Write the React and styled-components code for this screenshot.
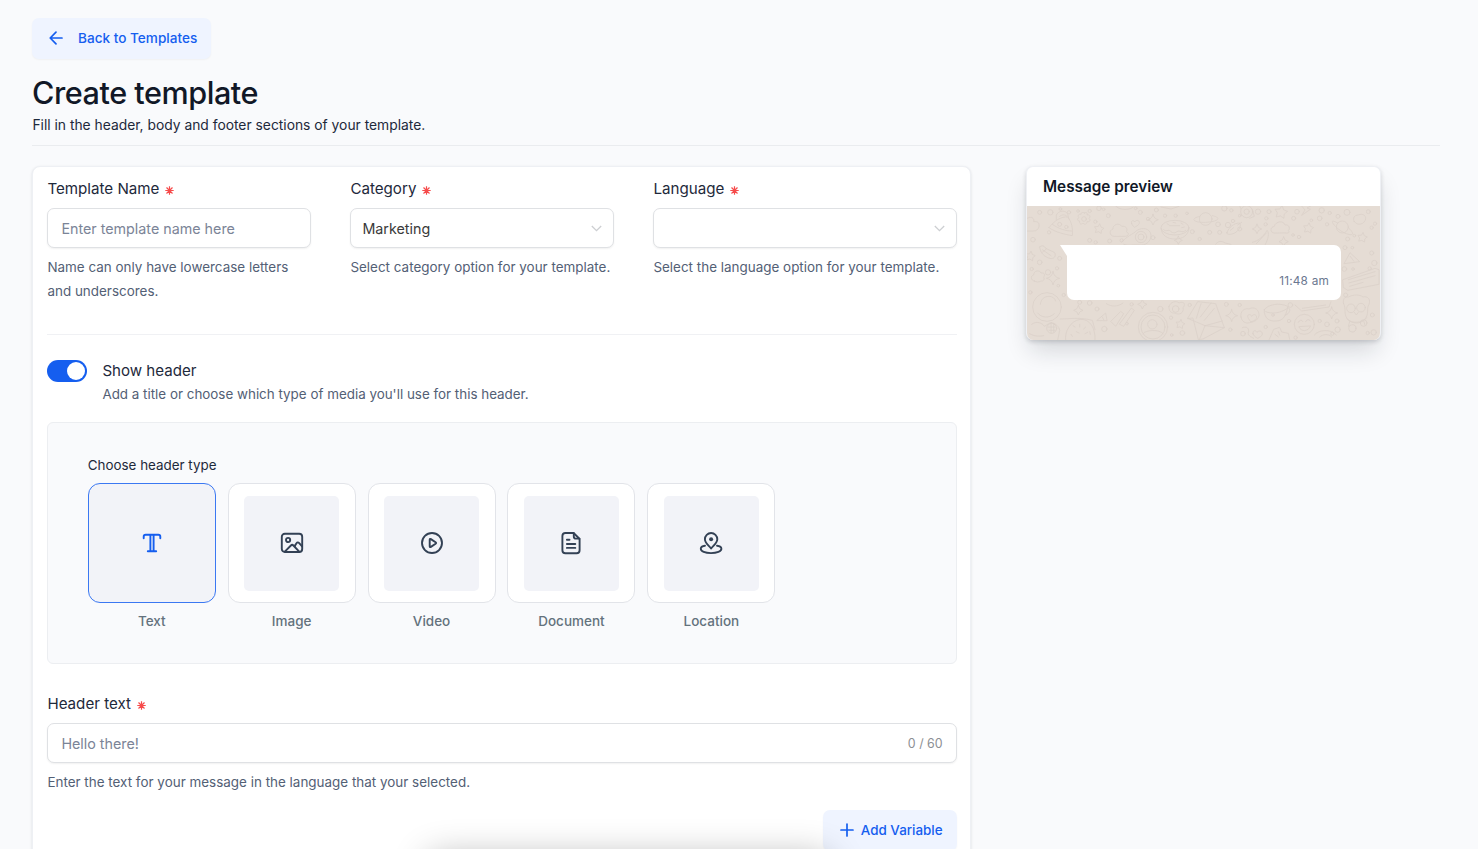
import { useState } from "react";
import styled, { createGlobalStyle } from "styled-components";

const GlobalStyle = createGlobalStyle`
  * {
    box-sizing: border-box;
  }

  body {
    margin: 0;
    background-color: #f9fafc;
    color: #1e293b;
    font-family: Inter, "Liberation Sans", sans-serif;
    overflow: hidden;
  }

  button,
  input {
    font-family: inherit;
  }
`;

const Page = styled.div`
  height: 849px;
  padding: 18px 38px 0 32px;
  overflow: hidden;
`;

const SoftButton = styled.button`
  display: inline-flex;
  align-items: center;
  gap: ${(props) => props.$gap}px;
  height: 41px;
  padding: 0 14px 1px 16px;
  border: none;
  border-radius: 7px;
  background-color: #eff4ff;
  box-shadow: 0 1px 2px rgba(0, 0, 0, 0.04);
  color: #155eef;
  font-size: ${(props) => props.$size || 13.6}px;
  font-weight: 500;
  cursor: pointer;
`;

const PageHead = styled.header`
  height: 87px;
  border-bottom: 1px solid #eaecef;
`;

const Title = styled.h1`
  margin: 0;
  padding-top: 15px;
  color: #111827;
  font-size: 30.6px;
  font-weight: 450;
  letter-spacing: -0.46px;
  line-height: 38px;
`;

const Subtitle = styled.p`
  margin: 0;
  padding: 1px 0 0 0.4px;
  font-size: 13.83px;
  line-height: 24px;
`;

const Columns = styled.main`
  display: flex;
  align-items: flex-start;
  padding-top: 20px;
`;

const FormCard = styled.section`
  width: 939px;
  height: 760px;
  padding: 11px 13.4px 0 14.4px;
  border: 1px solid #eef0f4;
  border-radius: 8px;
  background-color: white;
  box-shadow: 0 1px 3px rgba(16, 24, 40, 0.12);
`;

const FieldRow = styled.div`
  display: grid;
  grid-template-columns: 264px 264px 303.2px;
  column-gap: 39px;
  height: 157px;
  border-bottom: 1px solid #f0f1f4;
`;

const Label = styled.label`
  display: flex;
  align-items: center;
  gap: 6px;
  height: 21px;
  margin-bottom: 9px;
  font-size: 15.15px;
`;

const Control = styled.div`
  display: flex;
  align-items: center;
  height: 40px;
  padding: 0 ${(props) => props.$right || 13}px 0 ${(props) => props.$left || 13}px;
  border: 1px solid #dfe1e4;
  border-radius: 7px;
  background-color: white;
  box-shadow: 0 1px 2px rgba(0, 0, 0, 0.06);
`;

const Input = styled.input`
  flex: 1;
  min-width: 0;
  padding: 0;
  border: none;
  outline: none;
  background: none;
  color: #1e293b;
  font-size: 14.3px;

  &::placeholder {
    color: #7b8497;
    opacity: 1;
  }
`;

const SelectValue = styled.span`
  flex: 1;
  color: #3a3a3a;
  font-size: 14.3px;
`;

const Count = styled.span`
  color: #8c8f94;
  font-size: 12.4px;
`;

const Help = styled.p`
  margin: 8px 0 0;
  color: #536075;
  font-size: 13.45px;
  line-height: 23.6px;
`;

const ToggleRow = styled.div`
  display: flex;
  gap: 15px;
  height: 87px;
  padding-top: 24px;
`;

const Toggle = styled.button`
  display: flex;
  align-items: center;
  justify-content: ${(props) => (props.$on ? "flex-end" : "flex-start")};
  width: 40px;
  height: 22px;
  margin-top: 0.5px;
  padding: 2px;
  border: none;
  border-radius: 11px;
  background-color: ${(props) => (props.$on ? "#155eef" : "#cbd5e1")};
  cursor: pointer;
`;

const Knob = styled.span`
  width: 18px;
  height: 18px;
  border-radius: 50%;
  background-color: white;
`;

const ToggleTitle = styled.div`
  font-size: 15.1px;
  line-height: 24px;
`;

const ToggleHelp = styled(Help)`
  margin: 0;
  font-size: 13.4px;
`;

const TypePanel = styled.div`
  height: 242px;
  margin-bottom: 29px;
  padding: 31px 40px 0 39.4px;
  border: 1px solid #eceef1;
  border-radius: 6px;
  background-color: #f9fafc;
`;

const TypeHeading = styled.div`
  height: 29px;
  font-size: 13.4px;
  line-height: 23px;
`;

const TypeList = styled.div`
  display: flex;
  gap: 11.9px;
`;

const TypeItem = styled.div`
  width: 128px;
  text-align: center;
`;

const TypeCard = styled.button`
  display: flex;
  align-items: center;
  justify-content: center;
  width: 128px;
  height: 120px;
  padding: 0;
  border: 1px solid ${(props) => (props.$active ? "#3b78f2" : "#e2e4e9")};
  border-radius: 12px;
  background-color: ${(props) => (props.$active ? "#f2f3f8" : "white")};
  color: ${(props) => (props.$active ? "#155eef" : "#334155")};
  cursor: pointer;
`;

const TypeTile = styled.span`
  display: flex;
  align-items: center;
  justify-content: center;
  width: 95px;
  height: 95px;
  border-radius: 5px;
  background-color: #f2f3f8;
`;

const TypeName = styled.div`
  margin-top: 7px;
  color: #64727d;
  font-size: 13.5px;
  font-weight: 500;
  line-height: 23px;
`;

const Actions = styled.div`
  display: flex;
  justify-content: flex-end;
  padding-top: 15px;
`;

const PreviewCard = styled.aside`
  width: 355px;
  margin-left: 55px;
  border: 1px solid #eef0f4;
  border-bottom: none;
  border-radius: 7px;
  background-color: white;
  box-shadow: 0 14px 24px -4px rgba(16, 24, 40, 0.16), 0 2px 4px rgba(16, 24, 40, 0.16);
  overflow: hidden;
`;

const PreviewTitle = styled.h2`
  height: 39px;
  margin: 0;
  padding-left: 16px;
  color: #111827;
  font-size: 15.3px;
  font-weight: 600;
  line-height: 40px;
`;

const ChatArea = styled.div`
  display: grid;
  height: 134px;
  background-color: #e5dcd4;
`;

const Doodles = styled.svg`
  grid-area: 1 / 1;
  display: block;
  width: 353px;
  height: 134px;
`;

const Bubble = styled.div`
  grid-area: 1 / 1;
  position: relative;
  display: flex;
  align-items: flex-end;
  justify-content: flex-end;
  width: 274px;
  height: 55px;
  margin: 39px 0 0 40px;
  padding: 0 12px 11px;
  border-radius: 0 7px 7px 7px;
  background-color: white;

  &::before {
    content: "";
    position: absolute;
    top: 0;
    left: -7px;
    border-top: 11px solid white;
    border-left: 7px solid transparent;
  }
`;

const Time = styled.time`
  color: #6b7890;
  font-size: 11.8px;
  letter-spacing: 0.2px;
  line-height: 16px;
`;

// bar parked just below the fold, only its shadow is visible
const BottomBar = styled.div`
  position: fixed;
  top: 857px;
  left: 428px;
  width: 402px;
  height: 50px;
  border-radius: 10px;
  background-color: white;
  box-shadow: 0 0 36px rgba(0, 0, 0, 0.3);
  pointer-events: none;
`;

const RequiredMark = styled.svg`
  width: 9px;
  height: 9px;
  margin-top: 3px;
  stroke: #f64b4b;
  stroke-width: 1.2;
`;

function Required() {
  return (
    <RequiredMark viewBox="0 0 9 9">
      <path d="M4.5.3v8.4M.3 4.5h8.4M1.5 1.5l6 6M7.5 1.5l-6 6" />
    </RequiredMark>
  );
}

function Chevron() {
  return (
    <svg width="11" height="7" viewBox="0 0 11 7" fill="none" stroke="#cdcfd2" strokeWidth="1.3">
      <path d="M.8 1l4.7 4.7L10.2 1" />
    </svg>
  );
}

function ArrowLeft() {
  return (
    <svg width="16" height="16" viewBox="0 0 16 16" fill="none" stroke="currentColor" strokeWidth="1.7" strokeLinecap="round" strokeLinejoin="round">
      <path d="M14 8H2.4M8 2.2L2.2 8l5.8 5.8" />
    </svg>
  );
}

function Plus() {
  return (
    <svg width="16" height="16" viewBox="0 0 16 16" fill="none" stroke="currentColor" strokeWidth="1.7" strokeLinecap="round">
      <path d="M8 2v12M2 8h12" />
    </svg>
  );
}

const typeIcons = {
  Text: (
    <>
      <path d="M3.7 7.2V5.7c0-1.3.6-1.9 1.9-1.9h12.8c1.3 0 1.9.6 1.9 1.9v1.5" />
      <path d="M10.4 4v16.2M13.6 4v16.2M7.8 20.2h8.4" />
    </>
  ),
  Image: (
    <>
      <rect x="1.8" y="2.8" width="20.4" height="18.2" rx="3" />
      <circle cx="8.1" cy="9" r="2.1" />
      <path d="M4.8 20.6l6.1-6.1c.9-.9 1.6-.9 2.5 0l5.8 6.1M15.1 15.2v-.8l1.4-2.1c.8-1.2 1.8-1.2 2.7-.2l2.9 3.3" />
    </>
  ),
  Video: (
    <>
      <circle cx="12" cy="12" r="10" />
      <path d="M9.7 8.8v6.4c0 .9.5 1.1 1.2.7l4.7-3.1c.7-.5.7-1.1 0-1.6l-4.7-3.1c-.7-.4-1.2-.2-1.2.7z" />
    </>
  ),
  Document: (
    <>
      <path d="M14.6 2H6.4c-2 0-3 1-3 3v14.2c0 2 1 3 3 3h11.2c2 0 3-1 3-3V8z" />
      <path d="M14.8 2.2v3.2c0 1.6.6 2.2 2.2 2.2h3.4M7.9 8.8h2.6M7.9 13h8.4M7.9 16.9h8.4" />
    </>
  ),
  Location: (
    <>
      <path d="M12.3 17.3c2.2-2.9 6-5.4 6-9.1a6.2 6.2 0 0 0-12.4 0c0 3.7 3.8 6.2 6 9.1.1.2.3.2.4 0z" />
      <circle cx="12.1" cy="8.3" r="2" fill="currentColor" stroke="none" />
      <path d="M6 14.7c-2.6.3-4.2 1.4-4.2 3 0 2.6 4.3 4.4 10.2 4.4s10.4-1.8 10.4-4.4c0-1.6-1.7-2.7-4.4-3" />
    </>
  ),
};

function TypeIcon({ name }) {
  return (
    <svg width="24" height="24" viewBox="0 0 24 24" fill="none" stroke="currentColor" strokeWidth="1.9" strokeLinecap="round" strokeLinejoin="round">
      {typeIcons[name]}
    </svg>
  );
}

const dots = [
  [90, 172, 6], [122, 172, 8], [152, 162, 4], [178, 172, 5], [205, 168, 4], [257, 200, 5], [296, 182, 6],
  [268, 160, 7], [282, 163, 4], [240, 168, 5], [392, 172, 6], [378, 160, 4], [415, 192, 5], [440, 165, 6], [466, 182, 5],
  [498, 182, 5], [532, 175, 4], [548, 230, 6], [570, 252, 5], [600, 232, 6], [630, 232, 6], [644, 160, 8],
  [625, 208, 7], [655, 210, 8], [670, 198, 5], [665, 166, 5], [690, 182, 4], [690, 222, 6], [745, 170, 8],
  [770, 190, 5], [768, 208, 5], [778, 170, 6], [852, 190, 6], [862, 170, 7], [868, 246, 5], [850, 240, 4],
  [905, 196, 4], [930, 190, 7], [936, 166, 8], [952, 208, 5], [960, 174, 5], [985, 184, 6], [1012, 172, 9],
  [1034, 242, 4], [1014, 252, 6], [1076, 170, 6], [1086, 218, 5], [1096, 206, 5], [70, 254, 7], [90, 322, 7],
  [118, 232, 5], [240, 256, 6], [258, 262, 5], [300, 258, 6], [336, 256, 5], [430, 248, 6], [66, 342, 5],
  [115, 352, 8], [150, 310, 6], [142, 340, 5], [62, 412, 5], [146, 392, 4], [162, 420, 5], [210, 442, 6],
  [240, 444, 7], [262, 462, 6], [284, 522, 8], [352, 506, 4], [366, 448, 5], [452, 462, 8], [484, 488, 5],
  [518, 534, 7], [486, 540, 4], [540, 450, 5], [650, 448, 6], [662, 524, 5], [690, 450, 5], [700, 536, 7],
  [768, 516, 5], [790, 480, 4], [838, 498, 5], [842, 450, 7], [858, 548, 5], [930, 498, 5], [952, 508, 7],
  [982, 498, 6], [984, 524, 8], [968, 536, 5], [1088, 480, 6], [1092, 532, 8], [1074, 534, 5], [1006, 278, 6],
  [1028, 278, 4], [1086, 294, 6], [1094, 324, 8], [1080, 340, 5], [1004, 342, 7], [1030, 342, 4], [1008, 420, 6],
];

const stars = [
  [430, 194, 16], [742, 222, 14], [822, 260, 14], [130, 370, 20], [206, 466, 14], [398, 448, 14],
  [666, 482, 18], [966, 474, 18], [506, 256, 12],
];

const fivePoints = [
  [268, 222, 15], [814, 172, 20], [896, 220, 16], [1058, 248, 15], [62, 304, 15], [512, 508, 14],
];

function fivePointPath([x, y, size]) {
  const points = [];
  for (let i = 0; i < 10; i++) {
    const r = i % 2 ? size * 0.55 : size;
    const a = (i * Math.PI) / 5 - 1.4;
    points.push(`${x + r * Math.cos(a)},${y + r * Math.sin(a)}`);
  }
  return points.join(" ");
}

function ChatDoodles() {
  return (
    <Doodles viewBox="52 153 1059 402" preserveAspectRatio="none" fill="none" stroke="#dad1c9" strokeWidth="2.4" strokeLinejoin="round" strokeLinecap="round">
      {dots.map(([x, y, r]) => (
        <circle key={`${x}-${y}`} cx={x} cy={y} r={r} />
      ))}
      {stars.map(([x, y, s]) => (
        <path key={`${x}-${y}`} d={`M${x} ${y - s}q${s * 0.15} ${s * 0.85} ${s} ${s}q${-s * 0.85} ${s * 0.15} ${-s} ${s}q${-s * 0.15} ${-s * 0.85} ${-s} ${-s}q${s * 0.85} ${-s * 0.15} ${s} ${-s}z`} />
      ))}
      {fivePoints.map((star) => (
        <polygon key={star.join("-")} points={fivePointPath(star)} />
      ))}
      {/* clouds */}
      <path d="M52 190c14-8 22 0 20 10 12-2 18 4 16 14-2 10-8 14-18 14H52" />
      <path d="M312 244c-14-2-14-18-2-22-2-14 20-20 26-8 12-2 20 8 14 16 10 4 6 14-2 14z" />
      <path d="M792 234c-12-2-10-18 2-20 4-16 28-18 32-4 14-2 16 12 10 16 6 6-2 10-8 8z" />
      <path d="M74 378c-12-2-12-16-2-18 0-14 18-16 22-6 12-2 12 8 8 12 4 8-2 14-8 12-6 4-14 4-20 0z" />
      <path d="M1034 200c-6-10 0-20 12-20 12-6 24 2 22 12-4 16-24 22-34 8z" />
      {/* pizza slice and cake */}
      <path d="M118 218c16-22 38-34 56-32 12 14 16 34 14 56-24-4-50-10-70-24zM128 208c20 14 40 20 58 20M140 194v-14c6-14 30-16 34-2l4 14M150 184c8-6 16-6 22 0" />
      <circle cx="150" cy="208" r="6" />
      <circle cx="170" cy="216" r="5" />
      {/* flower */}
      <path d="M224 174c6-4 10 0 8 6 8-2 12 4 6 10 6 6 2 12-6 10 0 8-8 10-12 4-6 6-12 2-10-6-8 0-8-8-2-10-6-6 0-12 6-10 0-6 6-8 10-4z" />
      <circle cx="223" cy="192" r="7" />
      <path d="M366 206c-4-10 6-12 9-5 5-9 16-5 14 4-2 6-10 9-14 12-3-2-7-5-9-11z" />
      <path d="M318 153c8 12 40 14 52 4" />
      {/* avocado */}
      <path d="M336 262c14-18 34-24 46-36 16-10 40-6 42 14 0 22-18 32-36 30-20-2-30 4-46-2" />
      <circle cx="394" cy="246" r="17" />
      <circle cx="394" cy="246" r="9" />
      {/* donut */}
      <ellipse cx="496" cy="218" rx="42" ry="22" />
      <path d="M454 220c2 22 20 32 42 32s40-10 42-32M462 224c8 8 14-2 20 4s12 8 20 2 16 6 26-4M480 212h30M472 206l6 4M490 202l8 2M514 204l6 4M524 216l-8 2" />
      <path d="M454 156l30 6 24-8" />
      {/* planets */}
      <circle cx="588" cy="192" r="19" />
      <path d="M570 184c-34 8-14 20 18 18 38-2 50-14 20-20" />
      <circle cx="998" cy="216" r="18" />
      <path d="M984 204c-30-18-14 8 10 24 26 16 50 16 24-8" />
      {/* ufo, pepper, banana */}
      <circle cx="711" cy="170" r="18" />
      <circle cx="711" cy="170" r="8" />
      <path d="M694 162l-4-10M728 164l6 20-14 6" />
      <path d="M652 232c6-16 22-28 38-28 8 12-8 32-28 34-8 0-12 0-10-6zM684 210l12-8M662 226l10-8" />
      <path d="M728 262c18-4 34-18 44-36 8 8 4 26-6 44M740 266l30-32" />
      <path d="M618 268c6-10 18-12 28-4l18 4" />
      {/* lightning */}
      <path d="M876 153l10 12-10 16 26-18-10-4 14-8" />
      {/* hot dog left */}
      <path d="M90 276c6-6 14-4 18 4l26 12c8 10-2 22-14 18-14-4-28-14-30-34zM98 284l26 18M110 282l-12 10" />
      {/* triangle and ticket right */}
      <path d="M1022 294l28 26-46 6zM1022 304l10 14" />
      <path d="M1000 374l96-34 12 4v44l-94 18-12-8zM1016 374l80-24M1018 384l78-22M1020 394l40-12" />
      {/* balloon */}
      <circle cx="112" cy="456" r="43" />
      <path d="M92 448c2-16 12-24 26-24 10 0 18 6 20 14M84 474c10 14 34 18 50 2" />
      <path d="M66 508c14-12 32-4 38 6l20-12c14 4 24 12 26 24l-6 29M60 536c10 6 24 10 42 6" />
      <circle cx="126" cy="520" r="15" />
      <path d="M116 516h20M118 526h18M124 506v28M132 508v24" />
      {/* cookie */}
      <path d="M168 555c-4-24 14-58 44-62 28-2 46 26 44 62M152 492c26 0 60-6 96 4l8 28" />
      <path d="M190 512l6 4M210 508v8M228 516l-6 6M200 530l8 4M226 536l8-4M184 538l4 6M240 530l2 8" />
      {/* triangle, pencils */}
      <path d="M262 496l26-22 4 22zM278 486l4 8M304 500l14 14 24-38-8-6zM330 508l12 6 32-48-8-6zM290 446c16 10 34 10 50-2" />
      {/* person badge */}
      <circle cx="430" cy="516" r="44" />
      <circle cx="430" cy="516" r="36" />
      <circle cx="428" cy="508" r="14" />
      <path d="M400 536c8-12 50-14 60 0" />
      <path d="M478 454c4-14 22-18 30-10 16-8 20 6 12 14 4 16-12 24-24 16-12 2-20-8-18-20z" />
      <circle cx="498" cy="462" r="10" />
      {/* envelope */}
      <path d="M534 490l30-50 54 6 26 72-64 34-14 2-16-64zM534 490l52 22 52-14M586 512l-16 40M586 512l58 6M560 490l14-44M572 486l32-42M584 496l30-36" />
      {/* hearts and balloon */}
      <path d="M694 486c-4-18 12-28 24-24 16-10 32 4 30 20-4 16-18 20-34 22-12 0-18-8-20-18zM716 490c-8-14 8-14 10-6 6-10 18-4 14 6-4 6-10 10-16 10z" />
      <path d="M730 536c-2-10 8-12 12-4 6-8 18-2 16 6-2 6-10 10-14 12-8-4-12-8-14-14zM698 518c14-6 22 4 18 14-2 10 6 12 16 18" />
      {/* cup */}
      <path d="M764 464c-2 24 14 36 34 34 20 0 32-12 36-44-24-12-60-6-70 10zM768 470c20 8 44 4 62-8M834 458c12 0 6 22-8 22" />
      <path d="M778 555l14-32 18-6 6 14 20 4 4 18M796 538l10 8M806 530l4 10" />
      {/* smiley */}
      <circle cx="884" cy="508" r="30" />
      <path d="M866 502c4-8 10-8 14-2M888 500c4-8 10-8 14-2M868 516c6 16 28 14 34-2z" />
      <path d="M856 450l20 18 82-12 6-16M878 460l70-10" />
      <path d="M914 540c12-16 50-20 66 0M930 546c10-10 28-10 36 0" />
      {/* owl */}
      <path d="M1002 446c-4-14 4-22 14-20 14-8 34-8 44 0 14-4 24 8 18 22-4 6-4 12-4 20 0 20-14 36-34 36s-34-14-34-34c0-10 0-16-4-24z" />
      <circle cx="1024" cy="460" r="13" />
      <circle cx="1054" cy="458" r="13" />
      <path d="M1034 472l6 8 6-8M1012 492c16 14 42 14 60-4M1020 500l-4 14M1062 498l4 12" />
      <circle cx="1028" cy="520" r="11" />
      <circle cx="1062" cy="504" r="10" />
    </Doodles>
  );
}

export default function App() {
  const [name, setName] = useState("");
  const [headerText, setHeaderText] = useState("");
  const [showHeader, setShowHeader] = useState(true);
  const [headerType, setHeaderType] = useState("Text");

  const handleNameChange = (event) => {
    setName(event.target.value);
  };

  const handleHeaderTextChange = (event) => {
    setHeaderText(event.target.value);
  };

  return (
    <Page>
      <GlobalStyle />
      <SoftButton type="button" $gap={14}>
        <ArrowLeft />
        Back to Templates
      </SoftButton>
      <PageHead>
        <Title>Create template</Title>
        <Subtitle>Fill in the header, body and footer sections of your template.</Subtitle>
      </PageHead>

      <Columns>
        <FormCard>
          <FieldRow>
            <div>
              <Label>
                Template Name <Required />
              </Label>
              <Control>
                <Input
                  value={name}
                  onChange={handleNameChange}
                  type="text"
                  placeholder="Enter template name here"
                />
              </Control>
              <Help>Name can only have lowercase letters and underscores.</Help>
            </div>
            <div>
              <Label>
                Category <Required />
              </Label>
              <Control $left={11} $right={11}>
                <SelectValue>Marketing</SelectValue>
                <Chevron />
              </Control>
              <Help>Select category option for your template.</Help>
            </div>
            <div>
              <Label>
                Language <Required />
              </Label>
              <Control $left={11} $right={11}>
                <SelectValue />
                <Chevron />
              </Control>
              <Help>Select the language option for your template.</Help>
            </div>
          </FieldRow>

          <ToggleRow>
            <Toggle type="button" $on={showHeader} onClick={() => setShowHeader(!showHeader)}>
              <Knob />
            </Toggle>
            <div>
              <ToggleTitle>Show header</ToggleTitle>
              <ToggleHelp>
                Add a title or choose which type of media you'll use for this header.
              </ToggleHelp>
            </div>
          </ToggleRow>

          <TypePanel>
            <TypeHeading>Choose header type</TypeHeading>
            <TypeList>
              {Object.keys(typeIcons).map((type) => (
                <TypeItem key={type}>
                  <TypeCard
                    type="button"
                    $active={type === headerType}
                    onClick={() => setHeaderType(type)}
                  >
                    <TypeTile>
                      <TypeIcon name={type} />
                    </TypeTile>
                  </TypeCard>
                  <TypeName>{type}</TypeName>
                </TypeItem>
              ))}
            </TypeList>
          </TypePanel>

          <Label>
            Header text <Required />
          </Label>
          <Control>
            <Input
              value={headerText}
              onChange={handleHeaderTextChange}
              type="text"
              maxLength={60}
              placeholder="Hello there!"
            />
            <Count>{headerText.length} / 60</Count>
          </Control>
          <Help>Enter the text for your message in the language that your selected.</Help>
          <Actions>
            <SoftButton type="button" $gap={6} $size={13.4}>
              <Plus />
              Add Variable
            </SoftButton>
          </Actions>
        </FormCard>

        <PreviewCard>
          <PreviewTitle>Message preview</PreviewTitle>
          <ChatArea>
            <ChatDoodles />
            <Bubble>
              <Time>11:48 am</Time>
            </Bubble>
          </ChatArea>
        </PreviewCard>
      </Columns>
      <BottomBar />
    </Page>
  );
}
